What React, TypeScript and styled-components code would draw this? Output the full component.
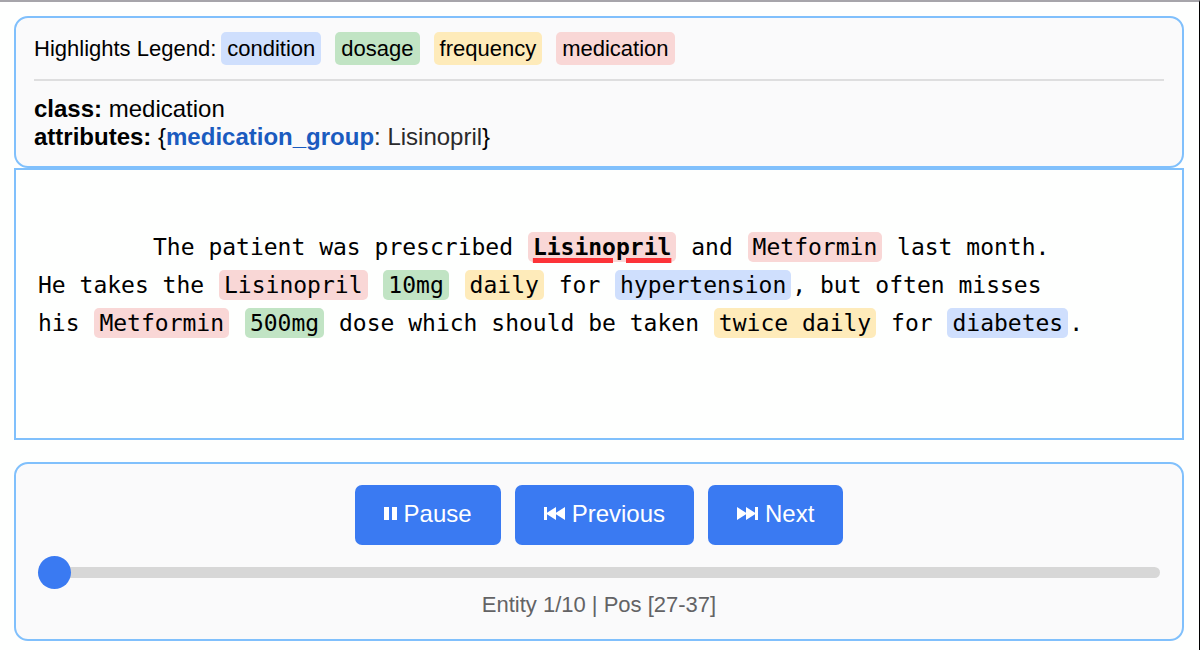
import React, { useEffect, useState } from "react";
import styled, { createGlobalStyle, css } from "styled-components";

type EntityClass = "condition" | "dosage" | "frequency" | "medication";

const classColors: Record<EntityClass, string> = {
  condition: "#cfdffd",
  dosage: "#c1e4c4",
  frequency: "#feebba",
  medication: "#f9d7d6",
};

const GlobalStyle = createGlobalStyle`
  * { box-sizing: border-box; }
  body {
    margin: 0;
    background: #fefffe;
    color: #000;
    font-family: "Liberation Sans", Arial, sans-serif;
  }
`;

const Page = styled.main`
  min-height: 100vh;
  padding: 14px 15px 9px 14px;
  border-top: 2px solid #a6a5aa;
  border-right: 1px solid #000;
`;

const Panel = styled.section`
  border: 2px solid #80c0fc;
  border-radius: 14px;
  background: #fafafb;
`;

const InfoPanel = styled(Panel)`
  padding: 14px 18px 15px;
`;

const Legend = styled.div`
  display: flex;
  flex-wrap: wrap;
  align-items: center;
  gap: 5px;
  padding-bottom: 14px;
  border-bottom: 2px solid #dededf;
  font-size: 22px;
  line-height: 33px;
`;

const LegendList = styled.ul`
  display: flex;
  flex-wrap: wrap;
  gap: 14px;
  margin: 0;
  padding: 0;
  list-style: none;
`;

const LegendItem = styled.li<{ $kind: EntityClass }>`
  padding: 0 6px;
  border-radius: 5px;
  background: ${({ $kind }) => classColors[$kind]};
`;

const Attributes = styled.div`
  padding-top: 14px;
  font-size: 24px;
  line-height: 28px;
`;

const AttributeName = styled.strong`
  color: #1a5bbf;
`;

const AttributeValue = styled.span`
  color: #2a2a2c;
`;

const TextPanel = styled(Panel)`
  min-height: 272px;
  padding: 58px 22px;
  border-radius: 0;
  background: #fefffe;
  font-family: "DejaVu Sans Mono", monospace;
  font-size: 23px;
  line-height: 38px;
`;

const TextLine = styled.div<{ $indented?: boolean }>`
  text-indent: ${({ $indented }) => ($indented ? "115px" : "0")};
  white-space: pre-wrap;
`;

const Entity = styled.mark<{ $kind: EntityClass; $current?: boolean }>`
  margin: 0 1px;
  padding: 2px 5px;
  border-radius: 5px;
  color: inherit;
  background: ${({ $kind }) => classColors[$kind]};
  ${({ $current }) =>
    $current &&
    css`
      font-weight: bold;
      text-decoration: underline 5px #fc3338;
      text-underline-offset: 3px;
    `}
`;

const Controls = styled(Panel)`
  margin-top: 22px;
  padding: 21px 22px;
`;

const Buttons = styled.div`
  display: flex;
  flex-wrap: wrap;
  justify-content: center;
  gap: 14px;
`;

const Button = styled.button`
  display: flex;
  align-items: center;
  gap: 7px;
  height: 60px;
  padding: 0 29px 3px;
  border: 0;
  border-radius: 7px;
  color: #fff;
  background: #3a7af2;
  font-family: inherit;
  font-size: 24px;
  cursor: pointer;
`;

const Slider = styled.input`
  display: block;
  width: 100%;
  height: 33px;
  margin: 11px 0 0;
  appearance: none;
  background: transparent;

  &::-webkit-slider-runnable-track {
    height: 11px;
    border-radius: 6px;
    background: #d7d7d7;
  }

  &::-webkit-slider-thumb {
    width: 33px;
    height: 33px;
    margin-top: -11px;
    appearance: none;
    border-radius: 50%;
    background: #3a7af2;
  }
`;

const Status = styled.p`
  margin: 3px 0 0;
  color: #636365;
  font-size: 22px;
  line-height: 26px;
  text-align: center;
`;

const PauseIcon = () => (
  <svg width="13" height="13" viewBox="0 0 13 13" fill="currentColor" aria-hidden="true">
    <path d="M0 0h5v13H0zM8 0h5v13H8z" />
  </svg>
);

const PlayIcon = () => (
  <svg width="13" height="13" viewBox="0 0 13 13" fill="currentColor" aria-hidden="true">
    <path d="M1 0l12 6.5L1 13z" />
  </svg>
);

const PreviousIcon = () => (
  <svg width="21" height="13" viewBox="0 0 21 13" fill="currentColor" aria-hidden="true">
    <path d="M0 0h3v5.8L12 0v5.8L21 0v13l-9-5.8V13L3 7.2V13H0z" />
  </svg>
);

const NextIcon = () => (
  <svg width="21" height="13" viewBox="0 0 21 13" fill="currentColor" aria-hidden="true">
    <path d="M21 0h-3v5.8L9 0v5.8L0 0v13l9-5.8V13l9-5.8V13h3z" />
  </svg>
);

const kinds: EntityClass[] = ["condition", "dosage", "frequency", "medication"];

interface Segment {
  text: string;
  kind?: EntityClass;
  current?: boolean;
}

const lines: Segment[][] = [
  [
    { text: "The patient was prescribed " },
    { text: "Lisinopril", kind: "medication", current: true },
    { text: " and " },
    { text: "Metformin", kind: "medication" },
    { text: " last month." },
  ],
  [
    { text: "He takes the " },
    { text: "Lisinopril", kind: "medication" },
    { text: " " },
    { text: "10mg", kind: "dosage" },
    { text: " " },
    { text: "daily", kind: "frequency" },
    { text: " for " },
    { text: "hypertension", kind: "condition" },
    { text: ", but often misses" },
  ],
  [
    { text: "his " },
    { text: "Metformin", kind: "medication" },
    { text: " " },
    { text: "500mg", kind: "dosage" },
    { text: " dose which should be taken " },
    { text: "twice daily", kind: "frequency" },
    { text: " for " },
    { text: "diabetes", kind: "condition" },
    { text: "." },
  ],
];

export default function App() {
  const [playing, setPlaying] = useState(true);

  useEffect(() => {
    document.title = "Entity highlights";
  }, []);

  return (
    <>
      <GlobalStyle />
      <Page>
        <InfoPanel>
          <Legend>
            <span>Highlights Legend:</span>
            <LegendList>
              {kinds.map((kind) => (
                <LegendItem key={kind} $kind={kind}>
                  {kind}
                </LegendItem>
              ))}
            </LegendList>
          </Legend>
          <Attributes>
            <div>
              <strong>class:</strong> medication
            </div>
            <div>
              <strong>attributes:</strong> {"{"}
              <AttributeName>medication_group</AttributeName>
              <AttributeValue>: Lisinopril</AttributeValue>
              {"}"}
            </div>
          </Attributes>
        </InfoPanel>
        <TextPanel>
          {lines.map((segments, row) => (
            <TextLine key={row} $indented={row === 0}>
              {segments.map(({ text, kind, current }, index) =>
                kind ? (
                  <Entity key={index} $kind={kind} $current={current}>
                    {text}
                  </Entity>
                ) : (
                  <React.Fragment key={index}>{text}</React.Fragment>
                ),
              )}
            </TextLine>
          ))}
        </TextPanel>
        <Controls>
          <Buttons>
            <Button type="button" onClick={() => setPlaying(!playing)}>
              {playing ? <PauseIcon /> : <PlayIcon />}
              {playing ? "Pause" : "Play"}
            </Button>
            <Button type="button">
              <PreviousIcon />
              Previous
            </Button>
            <Button type="button">
              <NextIcon />
              Next
            </Button>
          </Buttons>
          <Slider type="range" min={0} max={9} defaultValue={0} aria-label="Entity" />
          <Status>Entity 1/10 | Pos [27-37]</Status>
        </Controls>
      </Page>
    </>
  );
}
